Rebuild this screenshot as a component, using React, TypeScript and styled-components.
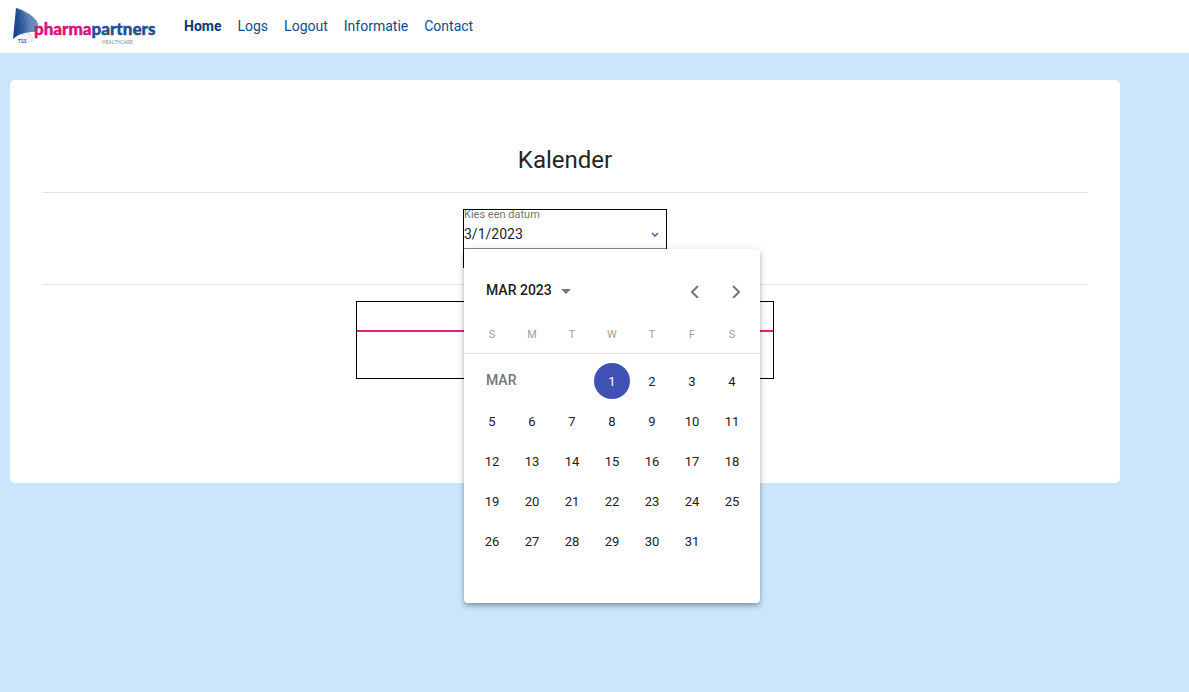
import React from "react";
import styled, { createGlobalStyle } from "styled-components";

const GlobalStyle = createGlobalStyle`
  *, *::before, *::after { box-sizing: border-box; }
  body {
    margin: 0;
    min-height: 100vh;
    background: #cbe5fc;
    color: #212529;
    font-family: Roboto, "Liberation Sans", sans-serif;
    font-size: 14px;
    line-height: 20px;
  }
  button, input { font: inherit; color: inherit; }
`;

const Header = styled.header`
  display: flex;
  align-items: center;
  height: 53px;
  padding: 0 12px 2px;
  gap: 26px;
  background: #fff;
`;

const Brand = styled.a`
  display: flex;
  width: 146px;
  height: 40px;
  text-decoration: none;
`;

const LogoArt = styled.svg`
  display: block;
  width: 146px;
  height: 40px;
  overflow: visible;
`;

const Nav = styled.nav`
  display: flex;
  gap: 16px;
`;

const NavLink = styled.a<{ $active?: boolean }>`
  color: ${(p) => (p.$active ? "#043c75" : "#0f4c8a")};
  font-weight: ${(p) => (p.$active ? 700 : 400)};
  text-decoration: none;
`;

const Card = styled.main`
  display: flex;
  flex-direction: column;
  align-items: center;
  margin: 27px 69px 27px 10px;
  padding: 64px 32px 104px;
  background: #fff;
  border-radius: 5px;
`;

const Title = styled.h1`
  margin: 0;
  font-size: 24px;
  line-height: 32px;
  font-weight: 400;
`;

const Divider = styled.hr`
  width: 100%;
  height: 1px;
  margin: 16px 0;
  border: 0;
  background: #e3e3e3;
`;

const DateField = styled.div`
  position: relative;
  width: 204px;
  height: 59px;
  border: 1px solid #000;
`;

const DateLabel = styled.label`
  display: block;
  height: 10px;
  font-size: 11px;
  line-height: 10px;
  color: #757575;
`;

const InputRow = styled.div`
  display: flex;
  align-items: center;
  height: 29px;
  border-bottom: 1px solid #8c8c8c;
`;

const DateInput = styled.input`
  flex: 1;
  min-width: 0;
  height: 28px;
  padding: 0;
  border: 0;
  outline: 0;
  background: transparent;
`;

const PlainButton = styled.button`
  display: flex;
  align-items: center;
  justify-content: center;
  padding: 0;
  border: 0;
  background: transparent;
  cursor: pointer;
`;

const Toggle = styled(PlainButton)`
  width: 22px;
  height: 28px;
  padding-top: 2px;
`;

const Popup = styled.section`
  position: absolute;
  z-index: 1;
  top: 39px;
  left: 0;
  width: 296px;
  height: 354px;
  border-radius: 4px;
  background: #fff;
  box-shadow: 0 2px 4px -1px rgba(0, 0, 0, 0.2), 0 4px 5px 0 rgba(0, 0, 0, 0.14),
    0 1px 10px 0 rgba(0, 0, 0, 0.12);
`;

const PopupBar = styled.div`
  display: flex;
  align-items: center;
  height: 76px;
  padding: 8px 4px 0 22px;
`;

const PeriodButton = styled(PlainButton)`
  gap: 9px;
  height: 36px;
  margin: 0 auto 2px 0;
  font-weight: 500;
  color: #212121;

  svg { margin-top: 2px; }
`;

const StepButton = styled(PlainButton)`
  width: 40px;
  height: 40px;
`;

const Month = styled.table`
  width: 100%;
  border-collapse: collapse;
  table-layout: fixed;
  font-size: 13px;
  color: #212121;

  th, td {
    padding: 0;
    text-align: center;
  }
  th:first-child, td:first-child { padding-left: 8px; }
  th:last-child, td:last-child { padding-right: 8px; }
  thead tr { border-bottom: 1px solid #e0e0e0; }
`;

const EdgeCol = styled.col`
  width: 48px;
`;

const WeekdayCell = styled.th`
  height: 28px;
  padding-bottom: 8px !important;
  vertical-align: middle;
  font-size: 11px;
  font-weight: 400;
  color: #9e9e9e;
`;

const SpacerCell = styled.td`
  height: 7px;
`;

const MonthCell = styled.td`
  &&& {
    padding: 0 0 2px 22px;
    text-align: left;
    font-size: 14px;
    font-weight: 500;
    color: #757575;
  }
`;

const DayCell = styled.td`
  height: 40px;
`;

const DayButton = styled(PlainButton)<{ $selected?: boolean }>`
  width: 36px;
  height: 36px;
  margin: 0 auto;
  padding-top: 2px;
  border-radius: 50%;
  background: ${(p) => (p.$selected ? "#3f51b5" : "transparent")};
  color: ${(p) => (p.$selected ? "#fff" : "inherit")};
`;

const Results = styled.section`
  width: 40%;
  height: 78px;
  border: 1px solid #000;
`;

const ResultsBar = styled.div`
  height: 30px;
  border-bottom: 2px solid #ec1d7b;
`;

const links = ["Home", "Logs", "Logout", "Informatie", "Contact"];
const weekdays = [
  ["Sunday", "S"],
  ["Monday", "M"],
  ["Tuesday", "T"],
  ["Wednesday", "W"],
  ["Thursday", "T"],
  ["Friday", "F"],
  ["Saturday", "S"],
];
const firstWeek = [1, 2, 3, 4];
const weeks = [5, 12, 19, 26].map((start) =>
  Array.from({ length: 7 }, (_, i) => (start + i <= 31 ? start + i : null))
);

function Logo() {
  return (
    <LogoArt viewBox="0 0 146 40" role="img" aria-label="PharmaPartners Healthcare">
      <defs>
        <linearGradient id="sail" x1="0" y1="0" x2="1" y2="0">
          <stop offset="0" stopColor="#143f82" />
          <stop offset="0.35" stopColor="#2d5c9d" />
          <stop offset="1" stopColor="#6f91bf" />
        </linearGradient>
        <clipPath id="sailEdge">
          <path d="M4 2C11 4 19 8 23 13C28 18 27 23 22 26C13 26 7 28 1 33C2 23 3 12 4 2Z" />
        </clipPath>
      </defs>
      <path d="M4 2C11 4 19 8 23 13C28 18 27 23 22 26C13 26 7 28 1 33C2 23 3 12 4 2Z" fill="url(#sail)" />
      <g clipPath="url(#sailEdge)" fill="none" stroke="#fff" strokeWidth="0.7" strokeOpacity="0.5" strokeDasharray="1 0.8">
        <path d="M8 3C15 9 19 17 19 28" />
        <path d="M10 4C17 10 21 18 21 28" />
        <path d="M12 5C19 11 23 18 23 28" />
        <path d="M15 7C22 12 25 18 25 26" />
        <path d="M6 3C12 9 17 17 17 28" />
        <path d="M4 6C9 11 14 19 15 28" strokeOpacity="0.25" />
      </g>
      <g fill="none" stroke="#8fabd0" strokeWidth="0.8" strokeDasharray="0.9 0.8">
        <path d="M10 28C14 30 16 32 17 36" />
        <path d="M13 27C17 29 19 32 20 36" />
        <path d="M16 27C19 29 21 32 21 35" />
      </g>
      <text x="6" y="37" fontFamily="Lato, sans-serif" fontSize="5" fontWeight="700" fill="#35629f">TSS</text>
      <text x="22" y="29" fontFamily="Lato, sans-serif" fontSize="17" fontWeight="900" strokeWidth="0.4">
        <tspan fill="#d5147c" stroke="#d5147c">pharma</tspan>
        <tspan fill="#1e4f94" stroke="#1e4f94">partners</tspan>
      </text>
      <text x="90" y="38" fontFamily="Open Sans, sans-serif" fontSize="5" fill="#7d848d">HEALTHCARE</text>
    </LogoArt>
  );
}

function Calendar() {
  return (
    <Popup role="dialog" aria-label="Kalender">
      <PopupBar>
        <PeriodButton type="button">
          MAR 2023
          <svg width="10" height="5" viewBox="0 0 10 5" aria-hidden="true">
            <path d="M0 0L5 5L10 0Z" fill="#757575" />
          </svg>
        </PeriodButton>
        <StepButton type="button" aria-label="Previous month">
          <svg width="12" height="14" viewBox="0 0 12 14" fill="none" stroke="#757575" strokeWidth="2" aria-hidden="true">
            <path d="M8 2L2 8L8 14" />
          </svg>
        </StepButton>
        <StepButton type="button" aria-label="Next month">
          <svg width="12" height="14" viewBox="0 0 12 14" fill="none" stroke="#757575" strokeWidth="2" aria-hidden="true">
            <path d="M3 2L9 8L3 14" />
          </svg>
        </StepButton>
      </PopupBar>
      <Month>
        <colgroup>
          <EdgeCol />
          <col span={5} />
          <EdgeCol />
        </colgroup>
        <thead>
          <tr>
            {weekdays.map(([name, letter]) => (
              <WeekdayCell key={name} scope="col" abbr={name}>
                {letter}
              </WeekdayCell>
            ))}
          </tr>
        </thead>
        <tbody>
          <tr>
            <SpacerCell colSpan={7} />
          </tr>
          <tr>
            <MonthCell colSpan={3}>MAR</MonthCell>
            {firstWeek.map((day) => (
              <DayCell key={day}>
                <DayButton type="button" $selected={day === 1} aria-pressed={day === 1}>
                  {day}
                </DayButton>
              </DayCell>
            ))}
          </tr>
          {weeks.map((week) => (
            <tr key={week[0]}>
              {week.map((day, i) => (
                <DayCell key={i}>{day && <DayButton type="button">{day}</DayButton>}</DayCell>
              ))}
            </tr>
          ))}
        </tbody>
      </Month>
    </Popup>
  );
}

export default function App() {
  return (
    <>
      <GlobalStyle />
      <Header>
        <Brand href="#">
          <Logo />
        </Brand>
        <Nav>
          {links.map((link) => (
            <NavLink key={link} href="#" $active={link === "Home"}>
              {link}
            </NavLink>
          ))}
        </Nav>
      </Header>
      <Card>
        <Title>Kalender</Title>
        <Divider />
        <DateField>
          <DateLabel htmlFor="date">Kies een datum</DateLabel>
          <InputRow>
            <DateInput id="date" type="text" defaultValue="3/1/2023" />
            <Toggle type="button" aria-label="Open calendar">
              <svg width="8" height="6" viewBox="0 0 8 6" fill="none" stroke="#3f51b5" strokeWidth="1.4" aria-hidden="true">
                <path d="M1 1L4 4L7 1" />
              </svg>
            </Toggle>
          </InputRow>
          <Calendar />
        </DateField>
        <Divider />
        <Results>
          <ResultsBar />
        </Results>
      </Card>
    </>
  );
}
